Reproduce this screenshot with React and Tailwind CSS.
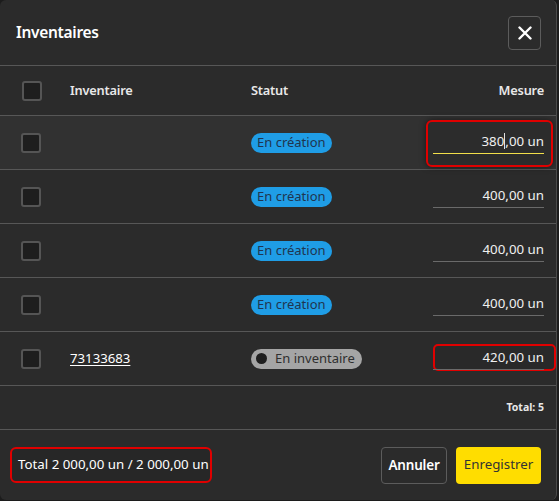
import React from "react";

const font = { fontFamily: '"Noto Sans", "Open Sans", Arial, sans-serif' };

function Checkbox() {
  return <div className="w-5 h-5 rounded-[3px] border-2 border-[#555] bg-[#1e1e1e]" />;
}

function MeasureInput({ value, focused, cursorAt }) {
  return (
    <div
      className={
        "w-[111px] h-[22px] flex items-center justify-end border-b text-[13.3px] text-[#f0f0f0] " +
        (focused ? "border-[#f2df4a]" : "border-[#6a6a6a]")
      }
    >
      {cursorAt != null ? (
        <span>
          {value.slice(0, cursorAt)}
          <span className="inline-block w-px h-[16px] bg-[#e0e0e0] align-[-3px]" />
          {value.slice(cursorAt)}
        </span>
      ) : (
        <span>{value}</span>
      )}
    </div>
  );
}

function StatusCreation() {
  return (
    <span className="inline-flex items-center h-5 px-[6px] rounded-full bg-[#1f9de6] text-[13px] text-[#1f3550] leading-none">
      En création
    </span>
  );
}

function StatusInventaire() {
  return (
    <span className="inline-flex items-center gap-[8px] h-5 pl-[5px] pr-[7px] rounded-full bg-[#a5a5a5] text-[13px] text-[#2f2f2f] leading-none">
      <span className="w-[11px] h-[11px] rounded-full bg-[#1f1f1f]" />
      En inventaire
    </span>
  );
}

function Row({ children, name, status, bg }) {
  return (
    <div className={"h-[54px] flex items-center border-b border-[#575757] " + (bg || "")}>
      <div className="w-[70px] pl-[21px] flex items-center">
        <Checkbox />
      </div>
      <div className="w-[181px] text-[13.2px] text-white">
        {name && <span className="underline underline-offset-2">{name}</span>}
      </div>
      <div className="flex-1 flex items-center">{status}</div>
      <div className="w-[123px] pr-3 flex justify-end relative">{children}</div>
    </div>
  );
}

export default function App() {
  return (
    <div className="w-[559px] h-[501px] bg-[#1c1c1c]" style={font}>
      <div className="w-[557px] h-[500px] bg-[#2b2b2b] rounded-md border-r border-[#4a4a4a] flex flex-col overflow-hidden">
        {/* Header */}
        <div className="h-[66px] flex items-center justify-between pl-4 pr-[15px] border-b border-[#575757]">
          <h1 className="text-[15.5px] font-semibold text-white tracking-[-0.3px]">Inventaires</h1>
          <button className="w-[33px] h-[34px] rounded-[4px] border border-[#5c5c5c] flex items-center justify-center">
            <svg width="14" height="14" viewBox="0 0 14 14">
              <path d="M1.5 1.5 L12.5 12.5 M12.5 1.5 L1.5 12.5" stroke="white" strokeWidth="2.4" strokeLinecap="round" />
            </svg>
          </button>
        </div>

        {/* Table header */}
        <div className="h-[50px] flex items-center border-b border-[#575757] text-[12.8px] font-semibold text-[#e8e8e8] tracking-[-0.2px]">
          <div className="w-[70px] pl-[22px] flex items-center">
            <Checkbox />
          </div>
          <div className="w-[181px]">Inventaire</div>
          <div className="flex-1">Statut</div>
          <div className="w-[123px] pr-3 text-right">Mesure</div>
        </div>

        <Row status={<StatusCreation />} bg="bg-[#313131]">
          <div className="absolute right-[3px] top-[-12px] w-[127px] h-[47px] rounded-[6px] border-2 border-[#e00000] bg-[#2c2c2c] shadow-[0_0_6px_rgba(0,0,0,0.5)]" />
          <div className="relative">
            <MeasureInput value="380,00 un" focused cursorAt={3} />
          </div>
        </Row>
        <Row status={<StatusCreation />}>
          <MeasureInput value="400,00 un" />
        </Row>
        <Row status={<StatusCreation />}>
          <MeasureInput value="400,00 un" />
        </Row>
        <Row status={<StatusCreation />}>
          <MeasureInput value="400,00 un" />
        </Row>
        <Row name="73133683" status={<StatusInventaire />}>
          <div className="absolute right-0 top-[-4px] w-[123px] h-[27px] rounded-[5px] border-2 border-[#e00000] bg-[#292929]" />
          <div className="relative">
            <MeasureInput value="420,00 un" />
          </div>
        </Row>

        {/* Total row */}
        <div className="h-[44px] flex items-center justify-end pr-3 border-b border-[#575757] text-[10.5px] font-bold text-[#e8e8e8]">
          Total: 5
        </div>

        {/* Footer */}
        <div className="flex-1 flex items-center justify-between pl-[10px] pr-[15px]">
          <div className="h-[36px] w-[202px] rounded-[6px] border-2 border-[#e00000] bg-[#272727] flex items-center pl-[6px] text-[13.3px] text-white whitespace-nowrap">
            Total 2 000,00 un / 2 000,00 un
          </div>
          <div className="flex items-center gap-[9px]">
            <button className="h-[37px] w-[66px] rounded-[4px] border border-[#5c5c5c] text-[13.5px] font-semibold text-white tracking-[-0.2px]">
              Annuler
            </button>
            <button className="h-[37px] w-[85px] rounded-[4px] bg-[#ffdd00] text-[13.3px] text-[#333]">
              Enregistrer
            </button>
          </div>
        </div>
      </div>
    </div>
  );
}
